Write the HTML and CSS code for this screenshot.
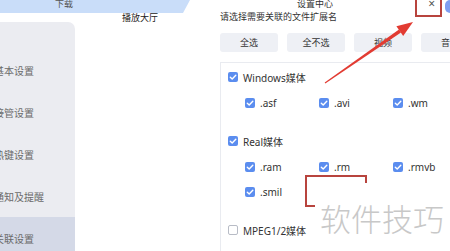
FILE: index.html
```html
<!DOCTYPE html>
<html lang="zh-CN">
<head>
<meta charset="UTF-8">
<title>设置中心</title>
<link rel="stylesheet" href="styles.css">
</head>
<body>
<div class="screen">
    <div class="main">
        <div class="tabbar"><span class="tab-label">下载</span></div>
        <div class="hall-title">播放大厅</div>
        <div class="sidebar">
            <div class="side-item"><span>基本设置</span></div>
            <div class="side-item"><span>接管设置</span></div>
            <div class="side-item"><span>热键设置</span></div>
            <div class="side-item"><span>通知及提醒</span></div>
            <div class="side-item active"><span>关联设置</span></div>
        </div>
    </div>

    <div class="dialog">
        <div class="dialog-head">
            <span class="dialog-title">设置中心</span>
            <span class="close-btn">×</span>
            <span class="blue-pill"></span>
        </div>
        <div class="subtitle">请选择需要关联的文件扩展名</div>
        <div class="btn-row">
            <button class="pick-btn">全选</button>
            <button class="pick-btn">全不选</button>
            <button class="pick-btn">视频</button>
            <button class="pick-btn">音频</button>
        </div>
        <div class="filter-panel">
            <div class="group">
                <div class="check-row"><span class="cb on"><svg viewBox="0 0 10 10"><path d="M2.3 5.2 4.2 7 7.8 3.2"/></svg></span>Windows媒体</div>
                <div class="sub-grid">
                    <div class="check-row"><span class="cb on"><svg viewBox="0 0 10 10"><path d="M2.3 5.2 4.2 7 7.8 3.2"/></svg></span>.asf</div>
                    <div class="check-row"><span class="cb on"><svg viewBox="0 0 10 10"><path d="M2.3 5.2 4.2 7 7.8 3.2"/></svg></span>.avi</div>
                    <div class="check-row"><span class="cb on"><svg viewBox="0 0 10 10"><path d="M2.3 5.2 4.2 7 7.8 3.2"/></svg></span>.wm</div>
                </div>
            </div>
            <div class="group">
                <div class="check-row"><span class="cb on"><svg viewBox="0 0 10 10"><path d="M2.3 5.2 4.2 7 7.8 3.2"/></svg></span>Real媒体</div>
                <div class="sub-grid">
                    <div class="check-row"><span class="cb on"><svg viewBox="0 0 10 10"><path d="M2.3 5.2 4.2 7 7.8 3.2"/></svg></span>.ram</div>
                    <div class="check-row"><span class="cb on"><svg viewBox="0 0 10 10"><path d="M2.3 5.2 4.2 7 7.8 3.2"/></svg></span>.rm</div>
                    <div class="check-row"><span class="cb on"><svg viewBox="0 0 10 10"><path d="M2.3 5.2 4.2 7 7.8 3.2"/></svg></span>.rmvb</div>
                    <div class="check-row"><span class="cb on"><svg viewBox="0 0 10 10"><path d="M2.3 5.2 4.2 7 7.8 3.2"/></svg></span>.smil</div>
                </div>
            </div>
            <div class="group">
                <div class="check-row"><span class="cb"></span>MPEG1/2媒体</div>
            </div>
        </div>
    </div>

    <!-- annotations drawn over the screenshot -->
    <svg class="marks" viewBox="0 0 450 251">
        <rect x="416" y="-2" width="25" height="18" class="mark-box"/>
        <rect x="306" y="176" width="60" height="30" class="mark-box"/>
        <polygon class="arrow" points="325.3,83.4 324.7,82.6 399,29.5 401,32.5"/>
        <polygon class="arrow" points="413,22 396.4,26.2 403.2,36"/>
    </svg>
    <div class="watermark">软件技巧</div>
</div>
</body>
</html>
```

FILE: styles.css
```css
* {
    margin: 0;
    padding: 0;
    box-sizing: border-box;
}

body {
    font-family: "Noto Sans", "Noto Sans CJK SC", sans-serif;
    background: #fff;
    color: #333;
    width: 450px;
    height: 251px;
    overflow: hidden;
}

.screen {
    position: relative;
    display: grid;
    grid-template-columns: 220px 1fr;
    width: 450px;
    height: 251px;
    overflow: hidden;
}

/* LEFT: main window */
.main {
    display: flex;
    flex-direction: column;
    height: 251px;
}

.tabbar {
    width: 190px;
    height: 13px;
    background: #c9ddf9;
    clip-path: polygon(0 0, 100% 0, calc(100% - 7px) 100%, 0 100%);
    padding-left: 55px;
    overflow: hidden;
}

.tab-label {
    display: block;
    font-size: 9px;
    line-height: 9px;
    margin-top: -1px;
    color: #555;
}

.hall-title {
    height: 9px;
    padding-left: 122px;
    font-size: 9px;
    line-height: 9px;
    color: #222;
}

.sidebar {
    flex: 1;
    width: 75px;
    background: #ebecf1;
    border-radius: 0 7px 0 0;
    padding-top: 27px;
    overflow: hidden;
}

.side-item {
    height: 42px;
    display: flex;
    align-items: center;
    font-size: 10px;
    color: #6a6a6a;
    white-space: nowrap;
}

.side-item span {
    margin-left: -6px;
}

.side-item.active {
    background: #d4d9e7;
}

/* RIGHT: settings dialog */
.dialog {
    display: flex;
    flex-direction: column;
    min-width: 0;
}

.dialog-head {
    height: 12px;
    display: flex;
    align-items: flex-start;
    padding-left: 77px;
}

.dialog-title {
    font-size: 9px;
    line-height: 9px;
    margin-top: -1px;
    color: #333;
}

.close-btn {
    margin-left: auto;
    font-size: 12px;
    line-height: 8px;
    color: #555;
}

.blue-pill {
    flex-shrink: 0;
    width: 5px;
    height: 13px;
    margin-left: 10px;
    background: #7f9ef0;
    border-radius: 5px 0 0 5px;
}

.subtitle {
    height: 9px;
    font-size: 9px;
    line-height: 9px;
    color: #333;
    white-space: nowrap;
}

.btn-row {
    display: flex;
    gap: 9px;
    margin-top: 12px;
}

.pick-btn {
    flex-shrink: 0;
    width: 58px;
    height: 19px;
    background: #eef0f5;
    border: none;
    border-radius: 3px;
    font-family: inherit;
    font-size: 9px;
    color: #333;
}

.filter-panel {
    flex: 1;
    margin-top: 10px;
    border-top: 1px solid #e9ebf0;
    border-left: 1px solid #e9ebf0;
    padding: 7px 0 0 7px;
}

.group + .group {
    margin-top: 24px;
}

.check-row {
    height: 14px;
    display: flex;
    align-items: center;
    gap: 5px;
    font-size: 10px;
    color: #333;
    white-space: nowrap;
}

.sub-grid {
    display: grid;
    grid-template-columns: repeat(3, 74px);
    row-gap: 11px;
    padding-left: 17px;
    margin-top: 12px;
}

.cb {
    flex-shrink: 0;
    width: 10px;
    height: 10px;
    border-radius: 2px;
    border: 1px solid #b8bcc6;
    background: #fff;
}

.cb.on {
    border: none;
    background: #5b8def;
}

.cb svg {
    display: block;
    width: 10px;
    height: 10px;
    fill: none;
    stroke: #fff;
    stroke-width: 1.4;
    stroke-linecap: round;
    stroke-linejoin: round;
}

/* OVERLAYS */
.marks {
    position: absolute;
    left: 0;
    top: 0;
    width: 450px;
    height: 251px;
    pointer-events: none;
}

.mark-box {
    fill: none;
    stroke: #b8443e;
    stroke-width: 2;
}

.arrow {
    fill: #e23b32;
}

.watermark {
    position: absolute;
    left: 315px;
    top: 183px;
    right: 0;
    bottom: 0;
    background: #fff;
    display: flex;
    align-items: center;
    padding-left: 5px;
    font-family: "Noto Sans CJK SC", sans-serif;
    font-weight: 300;
    font-size: 31px;
    color: #c8c8c8;
    white-space: nowrap;
}
```
